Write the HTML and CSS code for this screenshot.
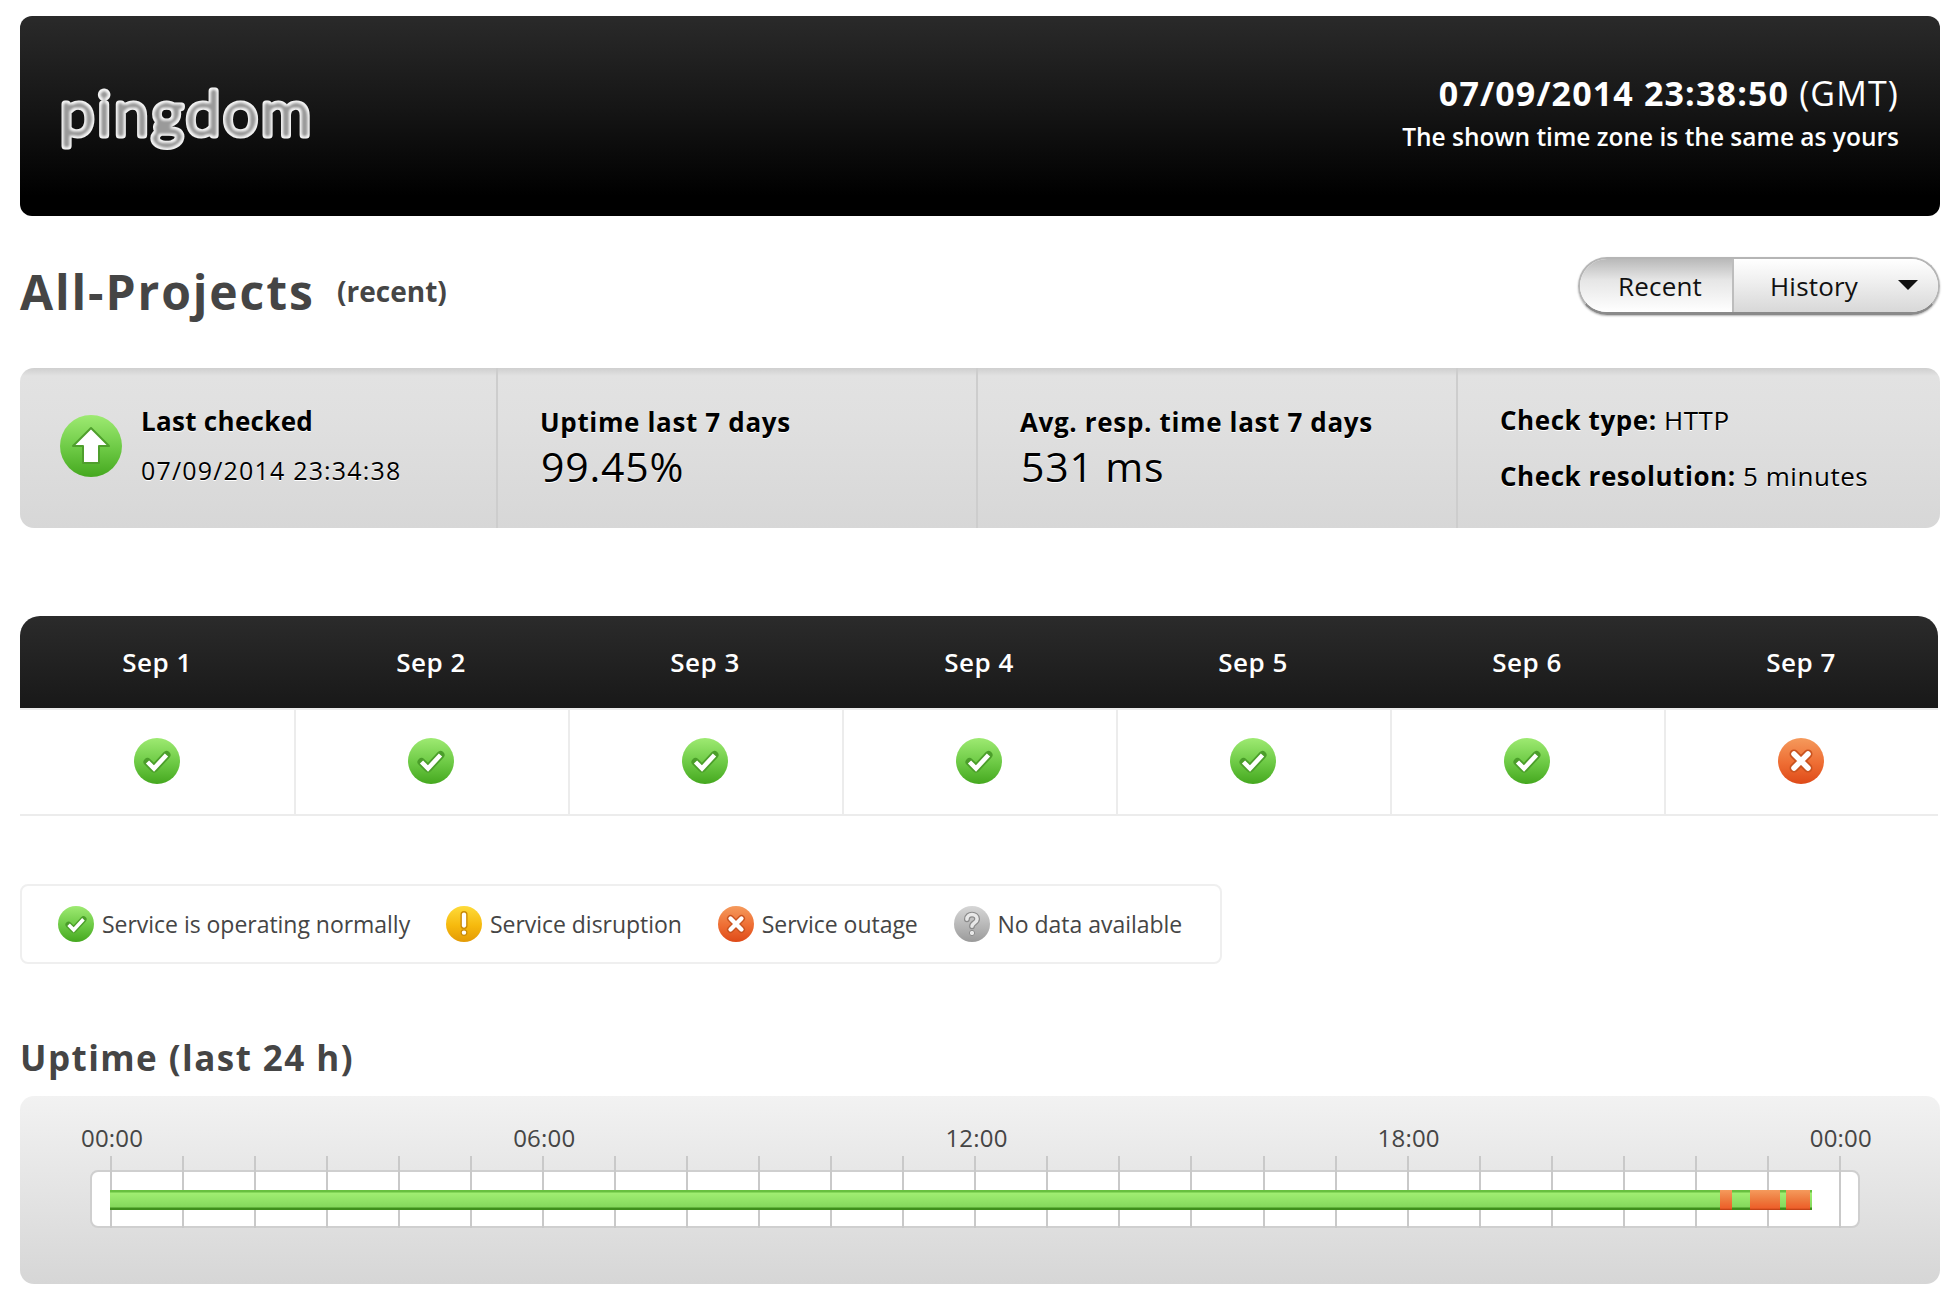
FILE: index.html
```html
<!DOCTYPE html>
<html lang="en">
<head>
<meta charset="utf-8">
<title>All-Projects - Pingdom</title>
<link rel="stylesheet" href="styles.css">
</head>
<body>
<svg class="defs" width="0" height="0" aria-hidden="true">
  <defs>
    <linearGradient id="gGreen" x1="0" y1="0" x2="0" y2="1"><stop offset="0" stop-color="#9eea72"/><stop offset=".55" stop-color="#6cc944"/><stop offset="1" stop-color="#45a81f"/></linearGradient>
    <linearGradient id="gRed" x1="0" y1="0" x2="0" y2="1"><stop offset="0" stop-color="#f59a5c"/><stop offset=".55" stop-color="#ee6d33"/><stop offset="1" stop-color="#de4a18"/></linearGradient>
    <linearGradient id="gYellow" x1="0" y1="0" x2="0" y2="1"><stop offset="0" stop-color="#fedb3a"/><stop offset=".55" stop-color="#f6b90d"/><stop offset="1" stop-color="#e39a06"/></linearGradient>
    <linearGradient id="gGrey" x1="0" y1="0" x2="0" y2="1"><stop offset="0" stop-color="#d6d6d6"/><stop offset=".6" stop-color="#b4b4b4"/><stop offset="1" stop-color="#9a9a9a"/></linearGradient>
    <filter id="logoCore" x="-5%" y="-20%" width="110%" height="140%">
      <feMorphology in="SourceAlpha" operator="erode" radius="2.4" result="core"/>
      <feGaussianBlur in="core" stdDeviation="1.3" result="soft"/>
      <feFlood flood-color="#9a9a9a"/>
      <feComposite in2="soft" operator="in" result="grey"/>
      <feMerge><feMergeNode in="SourceGraphic"/><feMergeNode in="grey"/></feMerge>
    </filter>
    <symbol id="iOk" viewBox="0 0 46 46">
      <circle cx="23" cy="23" r="23" fill="url(#gGreen)"/>
      <path d="M13.500 24l6.500 6.500L32.500 17" fill="none" stroke="#4b9e2a" stroke-width="8" stroke-linecap="round" stroke-linejoin="round"/>
      <path d="M13.500 24l6.500 6.500L32.500 17" fill="none" stroke="#fff" stroke-width="4.500"/>
    </symbol>
    <symbol id="iOut" viewBox="0 0 46 46">
      <circle cx="23" cy="23" r="23" fill="url(#gRed)"/>
      <path d="M16 16l14 14M30 16L16 30" fill="none" stroke="#c9531f" stroke-width="9" stroke-linecap="round"/>
      <path d="M16 16l14 14M30 16L16 30" fill="none" stroke="#fff" stroke-width="5.500" stroke-linecap="round"/>
    </symbol>
    <symbol id="iWarn" viewBox="0 0 46 46">
      <circle cx="23" cy="23" r="23" fill="url(#gYellow)"/>
      <path d="M23 11v14" fill="none" stroke="#c98a05" stroke-width="9" stroke-linecap="round"/>
      <path d="M23 11v14" fill="none" stroke="#fff" stroke-width="5.500" stroke-linecap="round"/>
      <circle cx="23" cy="34" r="3.600" fill="#fff" stroke="#c98a05" stroke-width="1.500"/>
    </symbol>
    <symbol id="iNone" viewBox="0 0 46 46">
      <circle cx="23" cy="23" r="23" fill="url(#gGrey)"/>
      <path d="M16.500 17c0-4 3-6 6.500-6s6.500 2 6.500 5.500c0 5-6.500 5-6.500 9.500" fill="none" stroke="#8a8a8a" stroke-width="7.500" stroke-linecap="round"/>
      <path d="M16.500 17c0-4 3-6 6.500-6s6.500 2 6.500 5.500c0 5-6.500 5-6.500 9.500" fill="none" stroke="#e8e8e8" stroke-width="4.500" stroke-linecap="round"/>
      <circle cx="23" cy="34.500" r="3.400" fill="#e8e8e8" stroke="#8a8a8a" stroke-width="1.200"/>
    </symbol>
  </defs>
</svg>

<header class="topbar">
  <svg class="logo" viewBox="0 0 256 70" role="img" aria-label="pingdom">
    <text class="logo-text" x="0" y="49" textLength="251" lengthAdjust="spacing" filter="url(#logoCore)">pingdom</text>
  </svg>
  <div class="clock">
    <div class="clock-time"><strong>07/09/2014 23:38:50</strong> (GMT)</div>
    <div class="clock-note">The shown time zone is the same as yours</div>
  </div>
</header>

<div class="title-row">
  <h1 class="page-title">All-Projects <small class="page-sub">(recent)</small></h1>
  <nav class="segment">
    <a class="seg seg-on">Recent</a>
    <a class="seg seg-off">History<span class="caret"></span></a>
  </nav>
</div>

<section class="stats">
  <div class="stat stat-first">
    <svg class="up-icon" viewBox="0 0 62 62" aria-hidden="true">
      <circle cx="31" cy="31" r="31" fill="url(#gGreen)"/>
      <path d="M31 13L49 31H39V48H23V31H13Z" fill="#fff" stroke="#4f9f2c" stroke-width="2" stroke-linejoin="round"/>
    </svg>
    <div>
      <div class="stat-label">Last checked</div>
      <div class="stat-date">07/09/2014 23:34:38</div>
    </div>
  </div>
  <div class="stat">
    <div class="stat-label">Uptime last 7 days</div>
    <div class="stat-big">99.45%</div>
  </div>
  <div class="stat">
    <div class="stat-label">Avg. resp. time last 7 days</div>
    <div class="stat-big">531 ms</div>
  </div>
  <div class="stat stat-last">
    <div class="stat-line"><b>Check type:</b> HTTP</div>
    <div class="stat-line"><b>Check resolution:</b> 5 minutes</div>
  </div>
</section>

<section class="days">
  <div class="day-head">Sep 1</div>
  <div class="day-head">Sep 2</div>
  <div class="day-head">Sep 3</div>
  <div class="day-head">Sep 4</div>
  <div class="day-head">Sep 5</div>
  <div class="day-head">Sep 6</div>
  <div class="day-head">Sep 7</div>
  <div class="day-cell"><svg class="day-icon"><use href="#iOk"/></svg></div>
  <div class="day-cell"><svg class="day-icon"><use href="#iOk"/></svg></div>
  <div class="day-cell"><svg class="day-icon"><use href="#iOk"/></svg></div>
  <div class="day-cell"><svg class="day-icon"><use href="#iOk"/></svg></div>
  <div class="day-cell"><svg class="day-icon"><use href="#iOk"/></svg></div>
  <div class="day-cell"><svg class="day-icon"><use href="#iOk"/></svg></div>
  <div class="day-cell"><svg class="day-icon"><use href="#iOut"/></svg></div>
</section>

<section class="legend">
  <div class="legend-item"><svg class="legend-icon"><use href="#iOk"/></svg>Service is operating normally</div>
  <div class="legend-item"><svg class="legend-icon"><use href="#iWarn"/></svg>Service disruption</div>
  <div class="legend-item"><svg class="legend-icon"><use href="#iOut"/></svg>Service outage</div>
  <div class="legend-item"><svg class="legend-icon"><use href="#iNone"/></svg>No data available</div>
</section>

<h2 class="section-title">Uptime (last 24 h)</h2>
<section class="chart">
  <div class="chart-labels"><span>00:00</span><span>06:00</span><span>12:00</span><span>18:00</span><span>00:00</span></div>
  <div class="track">
    <div class="ticks">
      <i></i><i></i><i></i><i></i><i></i><i></i><i></i><i></i><i></i><i></i><i></i><i></i><i></i><i></i><i></i><i></i><i></i><i></i><i></i><i></i><i></i><i></i><i></i><i></i><i></i>
    </div>
    <div class="bar">
      <span class="up" style="width:1610px"></span><span class="down" style="width:12px"></span><span class="up" style="width:18px"></span><span class="down" style="width:30px"></span><span class="up" style="width:6px"></span><span class="down" style="width:24px"></span><span class="up" style="width:2px"></span>
    </div>
  </div>
</section>
</body>
</html>
```

FILE: styles.css
```css
* { box-sizing: border-box; }
html, body { background: #fff; }
body {
  margin: 0;
  padding: 16px 16px 10px 20px;
  font-family: "Open Sans", "DejaVu Sans", sans-serif;
  color: #454545;
}
.defs { position: absolute; }

.topbar {
  height: 200px;
  border-radius: 12px;
  background: linear-gradient(#2a2a2a 0%, #161616 45%, #000 90%);
  display: flex;
  justify-content: space-between;
  align-items: flex-start;
  padding: 0 41px 0 40px;
}
.logo { width: 256px; height: 70px; margin-top: 70px; overflow: visible; }
.logo-text {
  font-family: "Lato", sans-serif;
  font-size: 62px;
  font-weight: 300;
  fill: #f4f4f4;
  stroke: #f4f4f4;
  stroke-width: 7px;
  stroke-linejoin: round;
  stroke-linecap: round;
}
.clock { text-align: right; color: #fff; margin-top: 53px; }
.clock-time { font-size: 34px; line-height: 48px; letter-spacing: 1.15px; }
.clock-time strong { font-weight: 700; }
.clock-note { font-size: 24.5px; line-height: 39px; font-weight: 600; }

.title-row {
  height: 152px;
  display: flex;
  justify-content: space-between;
  align-items: flex-start;
}
.page-title {
  margin: 43px 0 0;
  font-size: 48px;
  line-height: 64px;
  font-weight: 700;
  letter-spacing: 1.9px;
}
.page-sub { font-size: 28px; font-weight: 700; margin-left: 8px; vertical-align: 8px; letter-spacing: 0; }
.segment {
  margin-top: 41px;
  width: 362px;
  height: 58px;
  display: flex;
  border-radius: 29px;
  border: 2px solid #b5b5b5;
  border-bottom: 3px solid #8a8a8a;
  box-shadow: 0 1px 2px rgba(0, 0, 0, .3);
  overflow: hidden;
  font-size: 26px;
  color: #111;
}
.seg { display: flex; align-items: center; height: 100%; letter-spacing: .2px; }
.seg-on {
  width: 154px;
  justify-content: center;
  padding-left: 8px;
  background: linear-gradient(#b9b9b9 0%, #e6e6e6 40%, #fff 100%);
  border-right: 2px solid #bdbdbd;
}
.seg-off {
  flex: 1;
  position: relative;
  padding-left: 36px;
  background: linear-gradient(#fff 0%, #f0f0f0 40%, #d8d8d8 100%);
}
.caret {
  position: absolute;
  right: 20px;
  top: 21px;
  width: 0;
  height: 0;
  border-left: 10px solid transparent;
  border-right: 10px solid transparent;
  border-top: 10px solid #111;
}

.stats {
  height: 160px;
  border-radius: 14px;
  background: linear-gradient(#cfcfcf 0, #e2e2e2 8px, #e0e0e0 30%, #d7d7d7 100%);
  display: grid;
  grid-template-columns: 478px 480px 480px 1fr;
  color: #000;
}
.stat {
  border-right: 2px solid #cdcdcd;
  padding: 36px 0 0 42px;
}
.stat-first { display: flex; padding: 0 0 0 40px; align-items: flex-start; gap: 19px; }
.stat-first > div { margin-top: 35px; }
.stat-first .stat-label { letter-spacing: .3px; }
.stat-last { border-right: 0; padding-top: 34px; }
.up-icon { width: 62px; height: 62px; flex: none; margin-top: 47px; }
.stat-label { font-size: 26px; line-height: 36px; font-weight: 700; letter-spacing: .65px; text-shadow: 0 1px 0 #fff; }
.stat-date { font-size: 25px; line-height: 34px; margin-top: 14px; letter-spacing: 1.18px; text-shadow: 0 1px 0 #fff; }
.stat-big { font-size: 41px; line-height: 52px; letter-spacing: .8px; padding-left: 1px; text-shadow: 0 1px 0 #fff; }
.stat-line { font-size: 26px; line-height: 36px; margin-bottom: 20px; letter-spacing: .55px; text-shadow: 0 1px 0 #fff; }
.stat-line b { font-weight: 700; }

.days {
  margin-top: 88px;
  width: 1918px;
  display: grid;
  grid-template-columns: repeat(7, 1fr);
  border-bottom: 2px solid #ececec;
}
.day-head {
  height: 92px;
  background: linear-gradient(#2b2b2b, #181818);
  color: #fff;
  font-size: 26px;
  font-weight: 600;
  letter-spacing: .5px;
  display: flex;
  align-items: center;
  justify-content: center;
}
.day-head:first-child { border-top-left-radius: 20px; }
.day-head:nth-child(7) { border-top-right-radius: 20px; }
.day-cell {
  height: 106px;
  border-top: 2px solid #ececec;
  border-left: 2px solid #ececec;
  padding: 0 2px 2px 0;
  display: flex;
  align-items: center;
  justify-content: center;
}
.day-cell:nth-child(8) { border-left: 0; padding-right: 0; }
.day-icon { width: 46px; height: 46px; }

.legend {
  margin-top: 68px;
  width: 1202px;
  height: 80px;
  border: 2px solid #efefef;
  border-radius: 8px;
  display: flex;
  align-items: center;
  padding: 0 0 0 36px;
  gap: 35.800px;
  font-size: 23px;
}
.legend-item { display: flex; align-items: center; gap: 8px; letter-spacing: -.03px; }
.legend-icon { width: 36px; height: 36px; flex: none; }

.section-title {
  margin: 70px 0 0;
  height: 62px;
  font-size: 35px;
  line-height: 48px;
  font-weight: 700;
  letter-spacing: 1.45px;
}
.chart {
  height: 188px;
  border-radius: 14px;
  background: linear-gradient(#f2f2f2, #d6d6d6);
  padding: 24px 0 0 61px;
}
.chart-labels {
  width: 1791px;
  display: flex;
  justify-content: space-between;
  font-size: 24px;
  line-height: 36px;
  letter-spacing: .2px;
}
.track {
  position: relative;
  margin: 14px 0 0 9px;
  width: 1770px;
  height: 58px;
  background: #fff;
  border: 2px solid #cfcfcf;
  border-radius: 8px;
}
.ticks {
  position: absolute;
  left: 18px;
  top: -16px;
  bottom: -2px;
  width: 1731px;
  display: flex;
  justify-content: space-between;
}
.ticks i { width: 2px; background: #c9c9c9; }
.bar {
  position: absolute;
  left: 18px;
  top: 18px;
  height: 20px;
  display: flex;
}
.bar span { display: block; height: 20px; }
.up { background: linear-gradient(#68c040 0, #68c040 2px, #a0ee72 3px, #84d85c 17px, #3f8f1c 18px, #3f8f1c 20px); }
.down { background: linear-gradient(#f59a5c 0, #ee7a3e 50%, #ee5f2a 90%, #b83a10 100%); }
```
